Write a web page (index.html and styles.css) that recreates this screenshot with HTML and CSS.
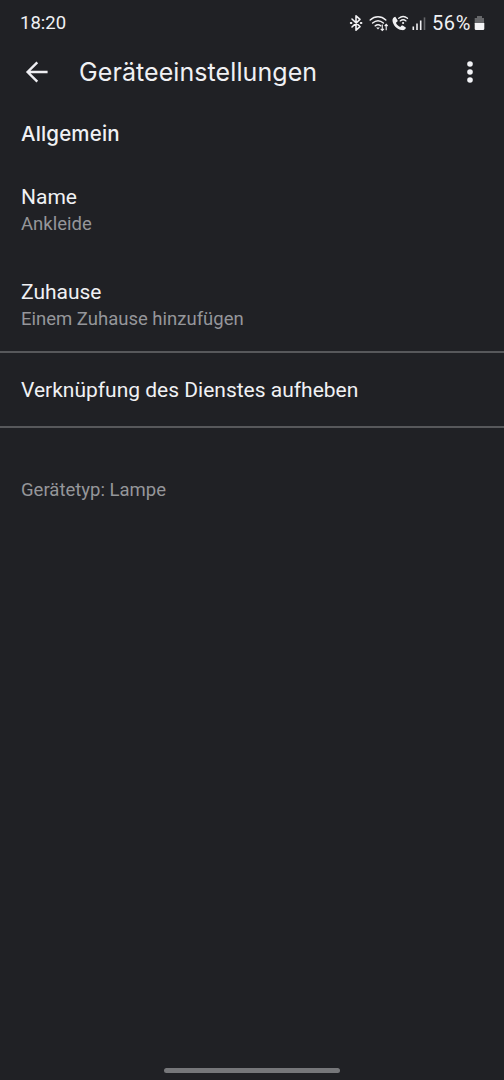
FILE: index.html
```html
<!DOCTYPE html>
<html lang="de">
<head>
<meta charset="utf-8">
<title>Geräteeinstellungen</title>
<link rel="stylesheet" href="styles.css">
</head>
<body>
<div class="screen">
  <div class="status">
    <span class="clock">18:20</span>
    <div class="indicators">
      <svg class="status-icons" width="80" height="20" viewBox="0 0 80 20" fill="none" stroke="#f1f1f3">
        <path d="M4 6l8 7.600-4 3.600V2.800l4 3.600L4 14" stroke-width="1.600" stroke-linejoin="round" stroke-linecap="round"/>
        <path d="M2.800 10h.6M12.800 10h.6" stroke-width="2" stroke-linecap="round"/>
        <g stroke-width="1.500" stroke-linecap="round">
          <path d="M22.200 7C26.800 2.800 33.200 2.800 37.800 7"/>
          <path d="M24.600 10C28 7.100 32 7.100 35.400 10"/>
          <path d="M27.200 12.800C29 11.400 31 11.400 32.800 12.800"/>
        </g>
        <path d="M28.200 14.600h3.600L30 16.600z" fill="#f1f1f3" stroke="none"/>
        <path d="M34.300 11.500v5.800M32.700 15.800l1.600 1.700 1.600-1.700M38.200 17.300v-5.800M36.700 13l1.500-1.600 1.500 1.600" stroke-width="1.100"/>
        <g transform="translate(1 .4)">
          <path d="M46.300 3.400l2.200 3.500c.3.500.2 1-.3 1.400l-1.300 1c.9 2 2.400 3.500 4.400 4.400l1.100-1.300c.4-.4.9-.5 1.400-.2l3.200 2.100c-.7 1.900-2.200 2.800-4.200 2.400C47.800 15.600 44.400 12.200 43.500 7.500c-.3-2 .9-3.600 2.800-4.100z" fill="#f1f1f3" stroke="none"/>
          <path d="M49.700 4.900C52.500 2.700 55.800 2.700 58.500 4.900M51.200 7.500C53.100 6 55.200 6 57 7.500" stroke-width="1.300" stroke-linecap="round"/>
          <circle cx="54.100" cy="9.600" r="1.100" fill="#f1f1f3" stroke="none"/>
        </g>
        <path d="M65.300 13.500v3.500M69 10.500V17M72.700 7.400V17" stroke-width="1.600"/>
        <path d="M76.500 4.400V17" stroke="#66676a" stroke-width="1.600"/>
      </svg>
      <span class="percent">56%</span>
      <svg class="battery" width="11" height="16" viewBox="0 0 11 16">
        <path d="M3 1h5v2h2v6H.7V3H3z" fill="#66676a"/>
        <path d="M.7 8h9.600v5.700q0 1.300-1.300 1.300H2Q.7 15 .7 13.700z" fill="#f4f4f6"/>
      </svg>
    </div>
  </div>
  <header class="appbar">
    <svg class="back" width="24" height="24" viewBox="0 0 24 24" fill="none" stroke="#eeeef2" stroke-width="2.400"><path d="M22.600 12H3M12.300 2.300L2.600 12l9.700 9.700"/></svg>
    <h1 class="title">Geräteeinstellungen</h1>
    <svg class="more" width="8" height="24" viewBox="0 0 8 24" fill="#f1f2f6"><circle cx="4" cy="4" r="2.800"/><circle cx="4" cy="12" r="2.800"/><circle cx="4" cy="20" r="2.800"/></svg>
  </header>
  <main>
    <h2 class="section">Allgemein</h2>
    <div class="item"><div class="label">Name</div><div class="value">Ankleide</div></div>
    <div class="item"><div class="label">Zuhause</div><div class="value">Einem Zuhause hinzufügen</div></div>
    <div class="unlink"><span class="label">Verknüpfung des Dienstes aufheben</span></div>
    <p class="value type">Gerätetyp: Lampe</p>
  </main>
  <div class="handle"></div>
</div>
</body>
</html>
```
FILE: styles.css
```css
* { box-sizing: border-box; }
body { margin: 0; background: #202125; color: #f0f1f4; font-family: Roboto, sans-serif; }
.screen { width: 504px; height: 1080px; display: flex; flex-direction: column; }
.status { height: 45px; padding: 1px 19px 0 20px; display: flex; align-items: center; justify-content: space-between; }
.clock { font-size: 18.5px; line-height: 24px; }
.indicators { display: flex; align-items: center; }
.status-icons { margin-right: 4px; }
.percent { font-size: 20px; line-height: 24px; width: 42px; letter-spacing: 0.6px; white-space: nowrap; }
.appbar { height: 54px; padding: 0 30px 0 25px; display: flex; align-items: center; }
.title { flex: 1; margin: 0 0 0 30px; font: 400 25px/32px Inter, sans-serif; letter-spacing: 0.08px; white-space: nowrap; }
main { flex: 1; }
.section { margin: 0; padding: 21px 21px 0; height: 73px; font: 500 20.5px/28px Inter, sans-serif; letter-spacing: 0.15px; }
.item { height: 95px; padding: 11px 21px 0; }
.label { font-size: 21px; line-height: 28px; }
.value { font-size: 18.5px; line-height: 25px; color: #95969a; }
.item .value { line-height: 27px; }
.item + .item { height: 84px; }
.unlink { height: 77px; padding: 0 21px; display: flex; align-items: center; border-top: 2px solid #57585b; border-bottom: 2px solid #57585b; }
.type { margin: 50px 21px 0; }
.handle { width: 176px; height: 5px; margin: 0 auto 7px; border-radius: 3px; background: #76777a; }
```
